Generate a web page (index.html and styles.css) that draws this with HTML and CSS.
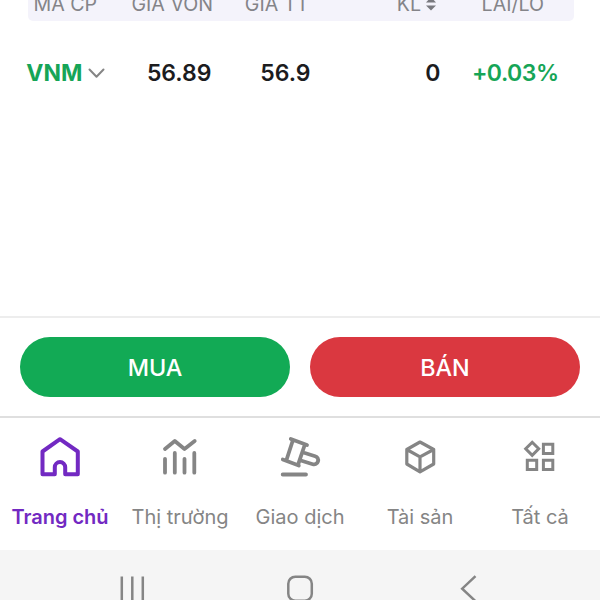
FILE: index.html
```html
<!DOCTYPE html>
<html lang="vi">
<head>
<meta charset="utf-8">
<title>VNM</title>
<link rel="stylesheet" href="styles.css">
</head>
<body>
<div class="screen">
  <main class="holdings">
    <div class="table-head">
      <span>MÃ CP</span><span>GIÁ VỐN</span><span>GIÁ TT</span>
      <span class="sort">KL<svg width="10" height="14" viewBox="0 0 10 14" fill="#79797f"><path d="M0 5.5L5 0L10 5.5Z"/><path d="M0 8.5H10L5 13.5Z"/></svg></span>
      <span>LÃI/LỖ</span>
    </div>
    <div class="table-row">
      <span class="symbol">VNM<svg width="17" height="11" viewBox="0 0 17 11" fill="none" stroke="#858585" stroke-width="2" stroke-linecap="round" stroke-linejoin="round"><path d="M1.5 1.5L8.5 8.7L15.5 1.5"/></svg></span>
      <span>56.89</span><span>56.9</span><span>0</span><span class="gain">+0.03%</span>
    </div>
  </main>
  <div class="actions">
    <button class="btn buy">MUA</button>
    <button class="btn sell">BÁN</button>
  </div>
  <nav class="tabs">
    <a class="tab active">
      <svg width="48" height="48" viewBox="0 0 48 48" stroke-width="4"><path d="M24 6.2L41.8 18.5V41.2H29.2V34.3A5.2 5.2 0 0 0 18.8 34.3V41.2H6.5V18.5Z"/></svg>
      <span class="bold">Trang chủ</span>
    </a>
    <a class="tab">
      <svg width="48" height="48" viewBox="0 0 48 48" stroke-width="3.8"><path d="M9 16L18.8 8L28.5 16L38.7 8M9 25.8V39.7M18.8 20V39.7M28.5 25.8V39.7M38.3 20V39.7"/></svg>
      <span>Thị trường</span>
    </a>
    <a class="tab">
      <svg width="48" height="48" viewBox="0 0 48 48" stroke-width="3.8"><path d="M14.8 6L31 12M6.8 26.5L22.8 32.5M16.8 7.5L10.3 27.5M28.7 12L22 31.8M26.5 19.3L39.2 23.2A4.1 4.1 0 0 1 36.8 31.2L24 27.3M6.7 41.5H30"/></svg>
      <span>Giao dịch</span>
    </a>
    <a class="tab">
      <svg width="48" height="48" viewBox="0 0 48 48" stroke-width="3.2"><path d="M24 9L37.7 16.5V31L24 38.8L10.8 31V16.5ZM10.8 16.5L24 23.8L37.7 16.5M24 23.8V38.8"/></svg>
      <span>Tài sản</span>
    </a>
    <a class="tab">
      <svg width="48" height="48" viewBox="0 0 48 48" stroke-width="3"><g stroke-linejoin="miter"><path d="M16.2 9.3L22.7 15.8L16.2 22.3L9.7 15.8ZM27.4 11.2H36.8V20.4H27.4ZM11.3 27.3H20.7V36.5H11.3ZM27.4 27.3H36.8V36.5H27.4Z"/></g></svg>
      <span>Tất cả</span>
    </a>
  </nav>
  <footer class="system">
    <svg width="28" height="28" viewBox="0 0 28 28"><path d="M3.8 1.5V30M14.3 1.5V30M24.8 1.5V30"/></svg>
    <svg width="28" height="28" viewBox="0 0 28 28"><rect x="2.3" y="1.7" width="23.5" height="24" rx="7"/></svg>
    <svg width="28" height="28" viewBox="0 0 28 28"><path d="M21.5 1.2L8.2 13.7L21.5 26.2"/></svg>
  </footer>
</div>
</body>
</html>
```

FILE: styles.css
```css
* { box-sizing: border-box; }

body {
  margin: 0;
  overflow: hidden;
  background: #fff;
  font-family: Inter, "Liberation Sans", sans-serif;
}

.screen {
  width: 600px;
  height: 600px;
  display: flex;
  flex-direction: column;
  overflow: hidden;
}

.holdings { height: 316px; }

.table-head,
.table-row {
  display: grid;
  white-space: nowrap;
  justify-items: end;
  align-items: start;
}

.table-head {
  grid-template-columns: 69px 116px 96px 127px 108px;
  width: 546px;
  height: 21px;
  margin-left: 28px;
  background: #f4f3fb;
  border-radius: 0 0 5px 5px;
  color: #848489;
  font-size: 19.6px;
  line-height: 24px;
}

.table-head span { margin-top: -8px; }

.table-head .sort {
  display: flex;
  align-items: center;
  gap: 5px;
}

.table-row {
  grid-template-columns: 77px 107px 99px 130px 118px;
  margin: 37px 0 0 27.5px;
  color: #1c1c1e;
  font-size: 23px;
  line-height: 31px;
  font-weight: 600;
}

.symbol {
  display: flex;
  align-items: center;
  gap: 5px;
  color: #16a557;
  font-weight: 700;
}

.gain {
  color: #16a557;
  letter-spacing: -0.5px;
}

.actions {
  display: flex;
  gap: 20px;
  height: 102px;
  padding: 19px 20px 0;
  border-top: 2px solid #ededed;
  border-bottom: 2px solid #dfdfdf;
}

.btn {
  width: 270px;
  height: 60px;
  padding: 0;
  border: 0;
  border-radius: 30px;
  color: #fff;
  font: 500 23.3px/61px Inter, "Liberation Sans", sans-serif;
}

.buy { background: #12aa55; }
.sell { background: #da3840; }

.tabs {
  display: flex;
  height: 132px;
  padding-top: 15px;
}

.tab {
  display: flex;
  flex: 1;
  flex-direction: column;
  align-items: center;
  gap: 22px;
  color: #858585;
  font-size: 20px;
  line-height: 28px;
  white-space: nowrap;
}

.active { color: #7229c2; }
.bold { font-weight: 600; }

.tab svg {
  fill: none;
  stroke: currentColor;
  stroke-linecap: round;
  stroke-linejoin: round;
}

.system {
  display: flex;
  justify-content: center;
  gap: 140px;
  height: 50px;
  padding-top: 25px;
  background: #f5f5f5;
}

.system svg {
  fill: none;
  stroke: #858585;
  stroke-width: 2.5;
}
```
